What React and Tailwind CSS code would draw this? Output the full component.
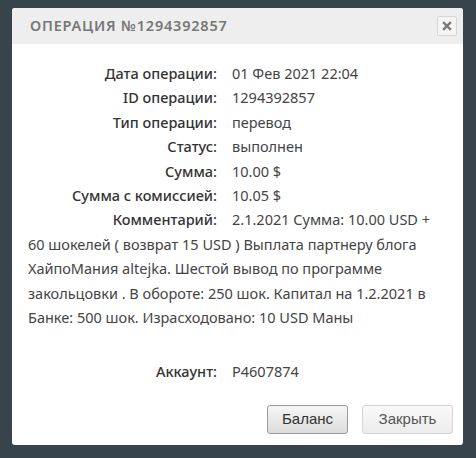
import React from 'react'

const rows = [
  ['Дата операции:', '01 Фев 2021 22:04'],
  ['ID операции:', '1294392857'],
  ['Тип операции:', 'перевод'],
  ['Статус:', 'выполнен'],
  ['Сумма:', '10.00 $'],
  ['Сумма с комиссией:', '10.05 $'],
]

const comment =
  '2.1.2021 Сумма: 10.00 USD + 60 шокелей ( возврат 15 USD ) Выплата партнеру блога ХайпоМания altejka. Шестой вывод по программе закольцовки . В обороте: 250 шок. Капитал на 1.2.2021 в Банке: 500 шок. Израсходовано: 10 USD Маны'

function Row({ label, children }) {
  return (
    <p className="leading-[24.4px]">
      <span className="inline-block w-[189px] pr-[15px] box-content text-right font-[460] text-[#333]">{label}</span>
      <span>{children}</span>
    </p>
  )
}

export default function App() {
  return (
    <div className="w-[476px] h-[458px] bg-[#37444c] pt-2 pl-3 overflow-hidden">
      <div className="w-[451px] h-[437px] bg-white rounded-[3px] overflow-hidden flex flex-col">
        {/* header */}
        <div className="h-[36px] bg-[#eeeeee] flex items-center justify-between pl-[18px] pr-[6px]">
          <h2 className="font-['Noto_Sans',sans-serif] font-semibold text-[14.5px] tracking-[0.8px] text-[#777]">ОПЕРАЦИЯ №1294392857</h2>
          <button className="w-[20px] h-[20px] border border-[#d6d6d6] rounded-[2px] bg-[#f4f4f4] flex items-center justify-center">
            <svg width="10" height="10" viewBox="0 0 10 10">
              <path d="M2 2 L8 8 M8 2 L2 8" stroke="#777" strokeWidth="2.4" strokeLinecap="square" />
            </svg>
          </button>
        </div>

        {/* body */}
        <div className="flex-1 pt-[17px] pl-4 pr-4 font-['Noto_Sans',sans-serif] text-[14.5px] text-[#444]">
          {rows.map(([l, v]) => (
            <Row key={l} label={l}>{v}</Row>
          ))}
          <Row label="Комментарий:">{comment}</Row>
          <div className="h-[30px]" />
          <Row label="Аккаунт:">P4607874</Row>
        </div>

        {/* footer */}
        <div className="flex justify-end gap-[14px] pr-[10px] pb-[11px] font-['Liberation_Sans',sans-serif] text-[15px]">
          <button className="w-[81px] h-[29px] rounded-[3px] border border-[#9a9a9a] bg-gradient-to-b from-[#f6f6f6] to-[#dcdcdc] text-[#333]">Баланс</button>
          <button className="w-[91px] h-[29px] rounded-[3px] border border-[#d4d4d4] bg-gradient-to-b from-[#fafafa] to-[#ececec] text-[#555]">Закрыть</button>
        </div>
      </div>
    </div>
  )
}
